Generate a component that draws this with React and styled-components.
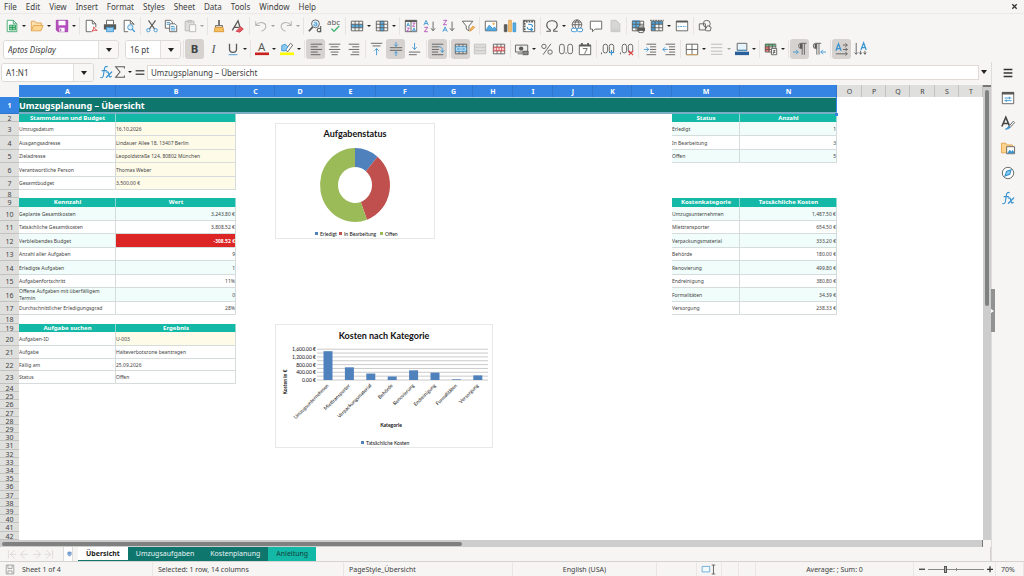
import React from "react";
import styled, { createGlobalStyle } from "styled-components";

const GlobalStyle = createGlobalStyle`
  * {
    box-sizing: border-box;
  }
  body {
    margin: 0;
    overflow: hidden;
    background: #f6f5f4;
    color: #3d3d3d;
    font-family: "Noto Sans", sans-serif;
    font-size: 8px;
  }
  button, input, select {
    font: inherit;
    color: inherit;
  }
`;

const Window = styled.div`
  display: flex;
  flex-direction: column;
  height: 100vh;
`;
const MenuBar = styled.nav`
  display: flex;
  align-items: center;
  height: 14px;
  padding: 0 4px;
  border-bottom: 1px solid #eceae8;
`;
const MenuItem = styled.button`
  border: 0;
  padding: 0;
  margin-right: 9px;
  background: none;
  line-height: 13px;
`;
const CloseButton = styled(MenuItem)`
  margin: 0 2px 0 auto;
  width: 7px;
  height: 13px;
`;
const Toolbar = styled.div`
  display: flex;
  flex: none;
  align-items: center;
  height: 24px;
  padding-left: ${(p) => (p.$second ? "3px" : "2px")};
  padding-bottom: ${(p) => (p.$second ? "2px" : "0")};
`;
const ToolButton = styled.button`
  display: flex;
  flex: none;
  align-items: center;
  justify-content: center;
  width: 19px;
  height: 20px;
  padding: 0;
  border: 0;
  border-radius: 3px;
  background: ${(p) => (p.$on ? "#d5d2cf" : "none")};
  opacity: ${(p) => (p.$dim ? 0.4 : 1)};
  svg {
    width: 14px;
    height: 14px;
  }
`;
const CaretButton = styled.button`
  display: flex;
  flex: none;
  align-items: center;
  justify-content: center;
  width: ${(p) => (p.$wide ? "20px" : "6px")};
  height: 18px;
  padding: 0;
  border: 0;
  border-left: ${(p) => (p.$wide ? "1px solid #e2dfdc" : "0")};
  background: none;
  opacity: ${(p) => (p.$dim ? 0.4 : 1)};
  &::after {
    content: "";
    border: solid transparent;
    border-width: ${(p) => (p.$wide || p.$big ? "4px 3px 0" : "2px 2px 0")};
    border-top-color: #222;
  }
`;
const Separator = styled.span`
  flex: none;
  width: 4px;
  height: 18px;
  background: linear-gradient(#e6e3e0, #e6e3e0) 2px 0 / 1px 100% no-repeat;
`;
const Combo = styled.div`
  display: flex;
  flex: none;
  width: ${(p) => p.$width};
  height: 19px;
  margin-right: ${(p) => p.$gap};
  border: 1px solid #dcd9d6;
  border-radius: 3px;
  background: #fff;
  overflow: hidden;
  input {
    flex: 1;
    min-width: 0;
    padding: 0 4px;
    border: 0;
    font-style: ${(p) => (p.$italic ? "italic" : "normal")};
  }
  button {
    background: #f8f7f6;
  }
`;
const Body = styled.div`
  display: flex;
  flex: 1;
  min-height: 0;
`;
const Main = styled.main`
  display: flex;
  flex: 1;
  flex-direction: column;
  min-width: 0;
`;
const FormulaBar = styled.div`
  display: flex;
  flex: none;
  align-items: center;
  height: 23px;
  padding: 0 4px 3px 1px;
`;
const FormulaButton = styled(ToolButton)`
  width: 14px;
  height: 16px;
`;
const FormulaInput = styled.input`
  flex: 1;
  min-width: 0;
  height: 15px;
  margin-right: 2px;
  padding: 0 3px;
  border: 1px solid #e2d9d4;
  background: #fff;
`;
const SheetArea = styled.div`
  display: flex;
  flex: 1;
  min-height: 0;
`;
const Sheet = styled.div`
  position: relative;
  flex: 1;
  min-width: 0;
  overflow: hidden;
  background: #fff;
`;
const Grid = styled.table`
  width: 100%;
  table-layout: fixed;
  border-collapse: collapse;
  line-height: 7px;
  td,
  th {
    padding: 0;
    overflow: hidden;
  }
`;
const GridRow = styled.tr`
  height: ${(p) => p.$height}px;
`;
const Corner = styled.td`
  background: #f6f5f4;
`;
const ColumnHead = styled.th`
  height: 12px;
  background: ${(p) => (p.$selected ? "#3584e4" : "#dfdfde")};
  color: ${(p) => (p.$selected ? "#fff" : "#444")};
  box-shadow: inset -1px 0 ${(p) => (p.$selected ? "#2f76cc" : "#c2c2c1")};
  font-size: 7px;
  font-weight: ${(p) => (p.$selected ? 700 : 400)};
`;
const RowHead = styled.th`
  background: ${(p) => (p.$selected ? "#3584e4" : "#dfdfde")};
  color: ${(p) => (p.$selected ? "#fff" : "#444")};
  box-shadow: inset 0 -1px ${(p) => (p.$selected ? "#2f76cc" : "#c2c2c1")};
  font-size: 7px;
  font-weight: ${(p) => (p.$selected ? 700 : 400)};
`;
const TitleCell = styled.td`
  background: #0f766e;
  color: #fff;
  box-shadow: inset 0 -2px #79afc6, inset -1px 0 #3584e4, inset 0 1px #a9cfdb;
  font-size: 9px;
  font-weight: 700;
  line-height: 12px;
`;
const tones = {
  plain: "#fff",
  mint: "#f0fdfa",
  cream: "#fefbe9",
  red: "#dc2626",
};
const Cell = styled.td`
  background: ${(p) => tones[p.$tone]};
  color: ${(p) => (p.$tone === "red" ? "#fff" : "#444")};
  font-size: 5px;
  font-weight: ${(p) => (p.$tone === "red" ? 700 : 400)};
  text-align: ${(p) => (p.$right ? "right" : "left")};
  box-shadow: inset -1px -1px #d6dcdc;
  ${Grid} & {
    padding-right: 1px;
  }
`;
const HeadCell = styled.td`
  background: #14b8a6;
  color: #fff;
  box-shadow: inset -1px 0 #8fd8cf;
  font-size: 6px;
  font-weight: 700;
  text-align: center;
`;
const FillHandle = styled.span`
  position: absolute;
  top: 28px;
  left: 835px;
  width: 3px;
  height: 3px;
  background: #3584e4;
`;
const ChartFrame = styled.figure`
  position: absolute;
  top: ${(p) => p.$top}px;
  left: 275px;
  margin: 0;
  border: 1px solid #e8e8e8;
  background: #fff;
  svg {
    display: block;
  }
  text {
    font-family: Lato, sans-serif;
    fill: #111;
  }
`;
const VerticalScroll = styled.div`
  width: 8px;
  padding: 3px 2px 0;
  background: #cdcdcd;
  border-top: 2px solid #777;
`;
const HorizontalScroll = styled.div`
  height: 7px;
  margin-right: 8px;
  padding: 2px 2px 0;
  background: #cdcdcd;
  border-right: 1px solid #777;
`;
const Thumb = styled.div`
  width: ${(p) => p.$width};
  height: ${(p) => p.$height};
  border-radius: 2px;
  background: #7f8080;
`;
const TabBar = styled.div`
  display: flex;
  flex: none;
  height: 14px;
  padding-left: 5px;
  border-right: 1px solid #d5d2cf;
`;
const TabNav = styled.button`
  width: 13px;
  padding: 0;
  border: 0;
  background: none;
  svg {
    display: block;
    width: 12px;
    height: 12px;
  }
`;
const TabLock = styled.span`
  display: flex;
  align-items: center;
  justify-content: flex-end;
  width: 10px;
  margin: 0 5px 0 6px;
  background: #fff;
  border: solid #ddd;
  border-width: 0 1px;
  svg {
    width: 5px;
    height: 6px;
  }
`;
const Tab = styled.button`
  height: 14px;
  padding: 0 8px;
  border: 0;
  background: ${(p) => p.$bg};
  color: ${(p) => p.$color};
  border-bottom: 1px solid ${(p) => (p.$active ? "#0f766e" : p.$bg)};
  font-size: 7px;
  font-weight: ${(p) => (p.$active ? 700 : 400)};
  line-height: 13px;
`;
const Sidebar = styled.aside`
  position: relative;
  display: flex;
  flex-direction: column;
  align-items: center;
  gap: 8px;
  width: 33px;
  padding-top: 2px;
  border-left: 1px solid #dedbd8;
`;
const SideButton = styled(ToolButton)`
  height: 17px;
`;
const SideHandle = styled.button`
  position: absolute;
  top: 227px;
  left: -1px;
  display: flex;
  align-items: center;
  width: 4px;
  height: 43px;
  padding: 0;
  border: 0;
  background: #929292;
  &::after {
    content: "";
    border: solid transparent;
    border-width: 2px 0 2px 3px;
    border-left-color: #fff;
  }
`;
const StatusBar = styled.footer`
  display: grid;
  grid-template-columns: 153fr 191fr 169fr 144fr 40fr 25fr 17fr 17fr 158fr 82fr 28fr;
  flex: none;
  height: 15px;
  border-top: 1px solid #d5d2cf;
`;
const StatusCell = styled.div`
  display: flex;
  align-items: center;
  justify-content: ${(p) => (p.$center ? "center" : "flex-start")};
  gap: 5px;
  min-width: 0;
  padding-left: ${(p) => (p.$center ? "0" : "5px")};
  border-right: 1px solid #e9e6e4;
  white-space: nowrap;
  font-size: 7px;
  svg {
    flex: none;
    width: 14px;
    height: 11px;
  }
`;
const FileCell = styled(StatusCell)`
  padding-left: 3px;
`;
const ZoomStep = styled.button`
  width: 8px;
  height: 12px;
  padding: 0;
  border: 0;
  background: none;
  svg {
    display: block;
    width: 8px;
    height: 12px;
  }
`;
const ZoomSlider = styled.input`
  flex: 1;
  min-width: 0;
  height: 9px;
  margin: 0;
  appearance: none;
  background: linear-gradient(#888, #888) 0 4px / 100% 1px no-repeat,
    linear-gradient(#888, #888) 50% 3px / 1px 3px no-repeat;
  &::-webkit-slider-thumb {
    appearance: none;
    width: 3px;
    height: 7px;
    border: 1px solid #555;
    background: #aaa;
  }
`;
const ZoomCell = styled(StatusCell)`
  gap: 2px;
  padding: 0 1px 0 4px;
`;

const G = "#5a5a58";
const B = "#3a94d0";

const lines = (rows, color = G) =>
  rows.map(([x, y, w]) => (
    <path key={y + "-" + x} d={`M${x} ${y}h${w}`} stroke={color} fill="none" />
  ));
const sheetGrid = (
  <path d="M1.5 2.5h13v11h-13zM1.5 6h13M1.5 10h13M5.8 2.5v11M10.2 2.5v11" stroke={G} fill="none" />
);
const letter = (ch, x, y, size, fill = G, extra = {}) => (
  <text x={x} y={y} fontSize={size} fill={fill} {...extra}>
    {ch}
  </text>
);

const icons = {
  new: (
    <g>
      <path d="M2.5 1.5h7l4 4v9h-11z" fill="#fff" stroke="#3ba66b" />
      <path d="M9.5 1.5v4h4" fill="none" stroke="#3ba66b" />
      <path d="M5 7h7v5.5H5zM5 9.7h7M8.5 7v5.500" fill="#8fd3a9" stroke="#2f9e5e" />
    </g>
  ),
  open: (
    <g stroke="#e0a04a">
      <path d="M1.5 13.5v-11h4l1.5 2h6v3" fill="#fbe0b0" />
      <path d="M1.5 13.5l2.5-6h11l-2.5 6z" fill="#fdd791" />
    </g>
  ),
  save: (
    <g>
      <path d="M1.5 1.5h13v13h-11l-2-2z" fill="#b84fc0" stroke="#9b3ea5" />
      <path d="M4 2h8v5H4zM5 10h6v4.5H5z" fill="#fff" />
      <path d="M6.5 11v3" stroke="#9b3ea5" />
    </g>
  ),
  pdf: (
    <g fill="#fff" stroke={G}>
      <path d="M8.5 14.5h-6v-13h7l4 4v4M9.5 1.5v4h4" />
      <path d="M9 14c2-2 2.5-4 2-5 2 3 3 4 4 4-2-.3-4 0-6 1z" stroke="#d8373a" />
    </g>
  ),
  print: (
    <g>
      <path d="M4 6V1.500h8V6" fill="#fff" stroke={G} />
      <path d="M1 6h14v6H1z" fill={G} />
      <path d="M4 9.5h8v5H4z" fill="#8ecaf0" stroke={B} />
    </g>
  ),
  preview: (
    <g fill="none" stroke={G}>
      <path d="M7 14.5H2.5v-13h7l4 4V7M9.5 1.5v4h4" fill="#fff" />
      <circle cx="9.5" cy="9.5" r="3" fill="#dff0fb" stroke={B} />
      <path d="M11.7 11.7l3 3" stroke={B} strokeWidth="1.5" />
    </g>
  ),
  cut: (
    <g fill="none">
      <path d="M4 1.5l7 10M12 1.5l-7 10" stroke={G} strokeWidth="1.3" />
      <circle cx="3.8" cy="12.8" r="1.9" stroke={B} />
      <circle cx="12.2" cy="12.8" r="1.9" stroke={B} />
    </g>
  ),
  copy: (
    <g fill="#fff" stroke={G}>
      <path d="M1.5 1.5h6l2 2v7h-8z" />
      <path d="M6.5 5.5h6l2 2v7h-8z" />
      <path d="M3 4h4M3 6h3M8 8.5h4M8 10.5h5M8 12.5h5" stroke={B} />
    </g>
  ),
  paste: (
    <g fill="#bbb" stroke={G}>
      <path d="M2.5 2.5h10v11h-10z" />
      <path d="M5.5 1.5h4v2h-4z" />
      <path d="M7.5 6.5h7v8h-7z" fill="#fff" />
    </g>
  ),
  clone: (
    <g>
      <path d="M8 1v6" stroke={G} strokeWidth="1.8" />
      <path d="M4 7.5h8v2H4z" fill="#fff" stroke={G} />
      <path d="M3.5 9.5h9l1 5h-11z" fill="#f6bf62" stroke="#d99530" />
    </g>
  ),
  clear: (
    <g>
      <path d="M1.5 13L8 2l2.5 8M4 9.5h5" fill="none" stroke={G} strokeWidth="1.5" />
      <path d="M6 14l5-5 3 2.5-4 3.5z" fill="#e75b64" stroke="#c9333d" />
    </g>
  ),
  undo: <path d="M2 2.5v5h5M2.5 7C6 2.5 13 3.5 13.5 8c0 3-2 5-5 6" fill="none" stroke={G} strokeWidth="1.2" />,
  redo: <path d="M14 2.5v5H9M13.5 7C10 2.5 3 3.5 2.5 8c0 3 2 5 5 6" fill="none" stroke={G} strokeWidth="1.2" />,
  find: (
    <g fill="none">
      <circle cx="8.5" cy="5.5" r="4.500" stroke={G} fill="#e2f1fb" />
      <path d="M5.500 9l-4.500 5" stroke={G} strokeWidth="2" />
      <path d="M7 4c2-1 3 0 3 1v3M10 5.500c-4-.5-4 2.500-2 2.500 1 0 2-1 2-1.500" stroke={B} />
      <path d="M14.500 8v7M14.500 12c0-2-4-2-4 .7s4 2.500 4 0" stroke={G} strokeWidth="1.300" />
    </g>
  ),
  spell: (
    <g>
      {letter("abc", 0, 7, 9)}
      <path d="M5 11l3 3 6-6" stroke="#3fb46f" fill="none" strokeWidth="1.5" />
    </g>
  ),
  row: (
    <g>
      <path d="M1 6h14v4H1z" fill="#5baee3" />
      {sheetGrid}
    </g>
  ),
  column: (
    <g>
      <path d="M5.8 2h4.4v12H5.8z" fill="#5baee3" />
      {sheetGrid}
    </g>
  ),
  sort: (
    <g fill="none">
      <path d="M1.5 1.5h13v13h-13zM8 1.5v13" fill="#fff" stroke={G} />
      <path d="M1.5 2.5h13" stroke={G} strokeWidth="2" />
      <path d="M3 8.500l1.700-4 1.700 4M3.500 7.300h2.500M9.700 14l1.700-4 1.700 4M10.200 12.800h2.500" stroke={B} />
      <path d="M9.700 4.700h3l-3 3.600h3M3.200 10.200h3l-3 3.600h3" stroke="#b04bb8" />
    </g>
  ),
  sortAsc: (
    <g fill="none">
      <path d="M1 7l2.500-5.500L6 7M2 5.200h3" stroke={B} />
      <path d="M1.500 9.500h4l-4 5h4" stroke="#b04bb8" />
      <path d="M11.5 3v10M9 10.5l2.5 3 2.5-3" stroke={G} />
    </g>
  ),
  sortDesc: (
    <g fill="none">
      <path d="M1.500 1.500h4l-4 5h4" stroke="#b04bb8" />
      <path d="M1 14.500L3.500 9 6 14.500M2 12.700h3" stroke={B} />
      <path d="M11.5 3v10M9 10.5l2.5 3 2.5-3" stroke={G} />
    </g>
  ),
  filter: (
    <g>
      <path d="M1.5 2.5h12L9 8v5.5l-3-2V8z" fill="#fff" stroke={G} />
      <path d="M10 14l1-3 3-3 1.5 1.5-3 3z" fill="#f5b65a" stroke="#dd9638" />
    </g>
  ),
  image: (
    <g>
      <path d="M1.5 2.5h13v11h-13z" fill="#fff" stroke={G} />
      <path d="M2 13l4-6 4 4 2-2 2 3v1z" fill="#58abdf" stroke={B} />
      <circle cx="11" cy="5.5" r="1.3" fill="#f2a83c" />
    </g>
  ),
  chart: (
    <g>
      <path d="M1.5 6.5h3v8h-3z" fill={G} stroke={G} />
      <path d="M6.5 1.5h3v13h-3z" fill="#f6c277" stroke="#dfa04a" />
      <path d="M11.5 4.5h3v10h-3z" fill="#58abdf" stroke={B} />
    </g>
  ),
  pivot: (
    <g fill="none">
      <path d="M1.5 1.5h13v13h-13z" fill="#fff" stroke={G} />
      <path d="M1.5 3h13M3 1.5v13" stroke={G} strokeWidth="2" strokeDasharray="2 1" />
      <path d="M6 9c0 3 2 3 6 3M10 10l2 2-2 2M12 9c0-3-2-3-5-3" stroke={B} strokeWidth="1.3" />
    </g>
  ),
  omega: (
    <path
      d="M1.500 14h4.500v-1.500C3.500 11 2 9.500 2 7c0-3 2.500-5 6-5s6 2 6 5c0 2.500-1.500 4-4 5.500V14h4.500"
      fill="none"
      stroke={G}
      strokeWidth="1.300"
    />
  ),
  link: (
    <g fill="none" stroke={G}>
      <circle cx="8" cy="6.5" r="5.5" />
      <path d="M2.5 6.5h11M8 1c-3 3-3 8 0 11M8 1c3 3 3 8 0 11M3.5 3.5h9" />
      <rect x="1.5" y="10.5" width="6.5" height="4" rx="2" stroke={B} fill="#fff" />
      <rect x="8" y="10.5" width="6.5" height="4" rx="2" stroke={B} fill="#fff" />
    </g>
  ),
  comment: <path d="M1.5 2.5h13v9H7l-3 3v-3H1.5z" fill="#fff" stroke={G} />,
  header: (
    <g>
      <path d="M3.5 1.5h6l4 4v9h-10z" fill="#aaa" stroke="#777" />
      <path d="M5 12.5h7" stroke="#777" />
    </g>
  ),
  printArea: (
    <g>
      <path d="M1.5 1.5h8.5v9H1.5z" fill="#5baee3" />
      {sheetGrid}
      <path d="M7 10h9v4H7z" fill={G} />
      <path d="M9 8h5v2H9zM9 13h5v2.5H9z" fill="#fff" stroke={G} />
    </g>
  ),
  freeze: (
    <g>
      <path d="M1.5 2.5h13v3.5H6v7.5H1.5z" fill="#4a9fd8" />
      {sheetGrid}
      <path d="M0 1.5h16" stroke={G} strokeDasharray="2 1" />
    </g>
  ),
  split: (
    <g fill="none">
      <path d="M1.5 2.5h13v11h-13z" fill="#fff" stroke={G} />
      <path d="M1.5 3h13" stroke={G} strokeWidth="2" />
      <path d="M3 8.5h10" stroke={B} strokeDasharray="2 1" />
    </g>
  ),
  shapes: (
    <g fill="none" stroke={G}>
      <path d="M1.5 5.5h7v7h-7z" />
      <circle cx="10" cy="5.5" r="4" />
      <path d="M8 12.5l3-5 4 2-1 4h-4z" fill="#f6f5f4" />
    </g>
  ),
  bold: letter("B", 3, 13, 13, "#444", { fontWeight: 700 }),
  italic: letter("I", 5, 13, 14, G, { fontStyle: "italic", fontFamily: "Liberation Serif, serif" }),
  underline: (
    <g>
      <path d="M4 2v6c0 5 8 5 8 0V2" fill="none" stroke={G} strokeWidth="1.500" />
      <path d="M3 14.5h10" stroke={B} />
    </g>
  ),
  fontColor: (
    <g>
      {letter("A", 3.5, 10.5, 13)}
      <path d="M0 13.5h16" stroke="#c9211e" strokeWidth="3" />
    </g>
  ),
  highlight: (
    <g>
      <path d="M6 9l6-7.500 2.500 2L9 11z" stroke={G} fill="#fff" />
      <path d="M2 10V4l4-1.500 3 3-3 4.500z" stroke={B} fill="#8ecaf0" />
      <path d="M0 13.5h16" stroke="#ff0" strokeWidth="3" />
    </g>
  ),
  left: <g>{lines([[2, 2.5, 13], [2, 5.5, 8], [2, 8.5, 13], [2, 11.5, 8], [2, 14.5, 11]])}</g>,
  center: <g>{lines([[1, 2.5, 13], [3, 5.5, 9], [1, 8.5, 13], [3, 11.5, 9], [4, 14.5, 7]])}</g>,
  right: <g>{lines([[2, 2.5, 12], [6, 5.5, 8], [2, 8.5, 12], [6, 11.5, 8], [4, 14.5, 10]])}</g>,
  top: (
    <g>
      {lines([[1, 1.5, 13], [3, 4.5, 9]])}
      <path d="M7.5 15V7.5M5 10l2.5-2.5L10 10" stroke={B} fill="none" />
    </g>
  ),
  middle: (
    <g>
      {lines([[1, 6.5, 14], [1, 9.5, 14]])}
      <path d="M8 0v5M6 3l2 2 2-2M8 16v-5M6 13l2-2 2 2" stroke={B} fill="none" />
    </g>
  ),
  bottom: (
    <g>
      {lines([[1, 11.5, 13], [1, 14.5, 9]])}
      <path d="M7.5 1v7.5M5 6l2.5 2.5L10 6" stroke={B} fill="none" />
    </g>
  ),
  wrap: (
    <g>
      {lines([[1, 2.5, 13], [1, 5.5, 8], [1, 8.5, 8], [1, 11.5, 7], [1, 14.5, 13]])}
      <path d="M9 5.5c4 0 4 2 4 6M11 9.5l2 2.5 2-2.500" stroke={B} fill="none" />
    </g>
  ),
  merge: (
    <g>
      {sheetGrid}
      <path d="M2 5.5h12v5H2z" fill="#d5effc" stroke={B} />
      <path d="M4 8h8M5.5 6.5L4 8l1.5 1.5M10.5 6.5L12 8l-1.5 1.5" stroke={B} fill="none" />
    </g>
  ),
  mergeCells: <path d="M1.5 2.5h13v11h-13zM1.5 6h13M1.5 10h13" fill="#bbb" stroke="#777" />,
  unmerge: (
    <g>
      {sheetGrid}
      <path d="M2 6h12v4H2zM8 6v4M5 6v4M11 6v4" fill="#fde3e3" stroke="#d8474a" />
    </g>
  ),
  currency: (
    <g>
      <path d="M.5 3.5h14v8H.5z" fill="#eee" stroke={G} />
      <circle cx="7" cy="7.5" r="2.5" fill={G} />
      <path d="M9 10.5h6v4H9zM3 13.5h5" fill="#888" stroke={G} />
    </g>
  ),
  percent: (
    <g fill="none" stroke={G}>
      <circle cx="4.5" cy="5" r="2.5" />
      <circle cx="11.5" cy="11.5" r="2.5" />
      <path d="M12.5 2l-9 12.5" />
    </g>
  ),
  number: (
    <g fill="none" stroke={G}>
      <rect x=".5" y="2.5" width="5.5" height="11" rx="2.7" />
      <path d="M8 12v1.5" />
      <rect x="10" y="2.5" width="5.5" height="11" rx="2.7" />
    </g>
  ),
  date: (
    <g>
      <path d="M1.5 3.5h13v11h-13z" fill="#fff" stroke={G} />
      <path d="M1.5 4h13M4.5 1v3M11.5 1v3" stroke={G} strokeWidth="2" />
      <path d="M5.5 7.5h5l-3 6" stroke={G} fill="none" />
    </g>
  ),
  addDecimal: (
    <g fill="none" stroke={G}>
      <path d="M.5 12v2" />
      <rect x="2.5" y="2.5" width="5" height="10" rx="2.5" />
      <rect x="9.5" y="2.5" width="5" height="10" rx="2.5" />
      <path d="M12 9v6M9 12h6" stroke={B} strokeWidth="1.3" />
    </g>
  ),
  delDecimal: (
    <g fill="none" stroke={G}>
      <path d="M.5 12v2" />
      <rect x="2.5" y="2.5" width="5" height="10" rx="2.5" />
      <rect x="9.5" y="2.5" width="5" height="10" rx="2.5" />
      <path d="M10 10l5 5M15 10l-5 5" stroke="#e0484b" strokeWidth="1.3" />
    </g>
  ),
  indent: (
    <g>
      {lines([[4, 2.5, 11], [8, 5.5, 7], [8, 8.5, 7], [8, 11.5, 7], [4, 14.5, 11]])}
      <path d="M1 8.5h5.5M4 6l2.5 2.5L4 11" stroke={B} fill="none" />
    </g>
  ),
  outdent: (
    <g>
      {lines([[4, 2.5, 11], [8, 5.5, 7], [8, 8.5, 7], [8, 11.5, 7], [4, 14.5, 11]])}
      <path d="M1 8.5h5.5M3.5 6L1 8.5 3.5 11" stroke={B} fill="none" />
    </g>
  ),
  borders: (
    <g fill="#fff">
      <path d="M1.5 2.5h13v12h-13zM1.5 8.5h13M8 2.5v12" stroke={G} />
      <path d="M1.5 14.5h13" stroke="#e5a85b" />
    </g>
  ),
  borderStyle: <g>{lines([[1, 2.5, 13], [1, 6.5, 13], [1, 10.5, 13], [1, 14, 13]])}</g>,
  borderColor: (
    <g>
      <path d="M2.5 1.5h11v8h-11z" fill="#e6f4fd" stroke={G} />
      <path d="M2.5 9.5h11" stroke={B} />
      <path d="M0 13h16" stroke="#2a6099" strokeWidth="4" />
    </g>
  ),
  conditional: (
    <g>
      <path d="M1 2h12v3H1z" fill="#64bd80" />
      <path d="M1 5h6v6H1z" fill="#e9716f" />
      <path d="M1.5 2.5h12v9h-12zM1.5 5.5h12M1.5 8.5h12M5.5 2.5v9M9.5 2.5v9" stroke={G} fill="none" />
      <path d="M8.5 7.5h6v7h-6zM10 10h3M10 12h3M12.5 9l-2 4.5" fill="#fff" stroke={G} />
    </g>
  ),
  ltr: (
    <g fill="none">
      <path d="M15.500 1.500H9a2.500 3 0 000 6h1.500M10.500 1.500v13M13 1.500v13" stroke={G} />
      <path d="M8 2h2.500v5H8z" fill={G} />
      <path d="M0 11.5h6M3.5 9l2.500 2.500-2.500 2.500" stroke={B} />
    </g>
  ),
  rtl: (
    <g fill="none">
      <path d="M10.500 1.500H4a2.500 3 0 000 6h1.500M5.500 1.500v13M8 1.500v13" stroke={G} />
      <path d="M3 2h2.500v5H3z" fill={G} />
      <path d="M16 11.5h-6M12.5 9l-2.500 2.500 2.500 2.500" stroke={B} />
    </g>
  ),
  textLtr: (
    <g fill="none">
      <path d="M1 10l3-8 3 8M2 7.500h4" stroke={B} strokeWidth="1.500" />
      <path d="M9 3.5h5M12 1.5l2 2-2 2M9 8.5h5M12 6.5l2 2-2 2M1 13.5h13M12 11.5l2 2-2 2" stroke={G} />
    </g>
  ),
  textTtb: (
    <g fill="none">
      <path d="M8 9l3-8 3 8M9 6.500h4" stroke={B} strokeWidth="1.500" />
      <path d="M2.5 1v13M.5 12l2 2 2-2M7.5 10v4M6 12l1.5 2L9 12M12.5 10v4M11 12l1.5 2 1.5-2" stroke={G} />
    </g>
  ),
  fx: (
    <g fill="none" stroke={B} strokeLinecap="round">
      <path d="M9.500 2c-2-1.200-3 .5-3.300 2.500L5 12c-.3 2-1.500 3-3 2.300M3.500 6.500h5" strokeWidth="1.300" />
      <path d="M8.500 8c1.500-.5 2 0 2.500 2l.7 2.500c.3 1.500 1.300 1.500 2.300.5M14.500 8L8.500 14" strokeWidth="1.500" />
    </g>
  ),
  sum: <path d="M13 4V2H3l5 6-5 6h10v-2" fill="none" stroke={G} strokeWidth="1.2" />,
  equals: <path d="M3 6.5h10M3 10.5h10" stroke={G} strokeWidth="1.8" />,
  hamburger: <path d="M3 4h10M3 8h10M3 12h10" stroke="#333" strokeWidth="1.8" />,
  properties: (
    <g fill="none">
      <path d="M1.5 2h13v12.5h-13z" fill="#fff" stroke={G} />
      <path d="M1 2.5h14" stroke={G} strokeWidth="3" />
      <path d="M4 8h8M4 11h8M9.5 6.5v3M6 9.5v3" stroke={B} />
    </g>
  ),
  styles: (
    <g>
      <path d="M1 12l4.500-10.500L9.500 11M3 8.500h5" fill="none" stroke="#444" strokeWidth="1.800" />
      <path d="M9 12l5-6 1.5 1.5-5 5.5z" fill="#fff" stroke={G} />
      <path d="M5 15c3 0 2-3 4-3s2 3-4 3z" fill={B} stroke={B} />
    </g>
  ),
  gallery: (
    <g>
      <path d="M.5 13.5v-11h5l1.5 2h6v9z" fill="#fcd28d" stroke="#e0a04a" />
      <path d="M6.5 6.5h9v8h-9z" fill="#fff" stroke={G} />
      <path d="M7 14l3-4 2 2 1.5-2 2 4z" fill={B} />
    </g>
  ),
  navigator: (
    <g>
      <circle cx="8" cy="8" r="6.5" fill="#fff" stroke={G} />
      <path d="M11.5 4.5l-1.5 5-5.5 2 2-5.500z" fill="#8ecaf0" stroke={B} strokeWidth="1.3" />
    </g>
  ),
  close: <path d="M3 3l10 10M13 3L3 13" stroke="#333" strokeWidth="3" />,
  tabFirst: <path d="M4.5 3v11M13 3L7 8.5l6 5.5M7 8.5h8" fill="none" stroke="#d5d2cf" />,
  tabPrev: <path d="M9 3L3 8.5 9 14M4 8.5h9" fill="none" stroke="#d5d2cf" />,
  tabNext: <path d="M7 3l6 5.5L7 14M3 8.5h9" fill="none" stroke="#d5d2cf" />,
  tabLast: <path d="M11.5 3v11M3 3l6 5.5L3 14M1 8.5h8" fill="none" stroke="#d5d2cf" />,
  lock: <path d="M3 2h10v8l-5 5-5-5zM6.5 6h3" fill="#9cc1e8" stroke="#3465a4" strokeWidth="2" />,
  selection: (
    <g fill="none">
      <path d="M-2 3.5h11v8H-2z" fill="#f4fbff" stroke={B} />
      <path d="M12 1.5h5M12 14.5h5M14.5 1.5v13" stroke={G} strokeWidth="1.3" />
    </g>
  ),
  minus: <path d="M2 8.5h12" stroke="#333" strokeWidth="2.5" />,
  plus: <path d="M2 8.5h12M8 2.5v12" stroke="#333" strokeWidth="2.5" />,
};

const Icon = ({ name }) => (
  <svg viewBox="0 0 16 16" overflow="visible" aria-hidden="true">
    {icons[name]}
  </svg>
);

// "|" is a separator, "+" a drop-down arrow, "*" pressed, "-" disabled
const standardTools =
  "new+ open+ save+ | pdf print preview | cut copy paste-+ | clone clear | undo-+ redo-+ | find spell | row+ column+ | sort sortAsc sortDesc filter | image chart pivot | omega+ link comment header- | printArea freeze+ split | shapes";
const formatTools =
  "| bold* italic underline+ | fontColor+ highlight+ | left* center right | top middle* bottom | wrap* | merge* mergeCells- unmerge | currency+ percent number date | addDecimal delDecimal | indent outdent | borders+ borderStyle-+ borderColor+ | conditional+ | ltr* rtl | textLtr* textTtb";

const Tools = ({ spec }) =>
  spec.split(" ").map((item, i) => {
    if (item === "|") return <Separator key={i} />;
    const name = item.replace(/[-+*]/g, "");
    const dim = item.includes("-");
    return (
      <React.Fragment key={i}>
        <ToolButton aria-label={name} $on={item.includes("*")} $dim={dim}>
          <Icon name={name} />
        </ToolButton>
        {item.includes("+") && <CaretButton aria-label={name + " options"} $dim={dim} />}
      </React.Fragment>
    );
  });

const menus = ["File", "Edit", "View", "Insert", "Format", "Styles", "Sheet", "Data", "Tools", "Window", "Help"];

const columns = [
  ["A", 97], ["B", 120], ["C", 39], ["D", 50], ["E", 51], ["F", 58], ["G", 39],
  ["H", 40], ["I", 40], ["J", 40], ["K", 39], ["L", 40], ["M", 68], ["N", 97],
  ["O", 25], ["P", 24], ["Q", 24], ["R", 25], ["S", 24], ["T", null],
];

const heights = [17, 8, 14, 14, 13, 14, 13, 8, 9, 14, 13, 14, 13, 14, 13, 14, 13, 9, 8, 14, 13, 12, 13];
const rowHeight = (n) => heights[n - 1] || (n % 5 === 1 ? 9 : 8);

// row number: [first cell, second cell, tone, tone, second cell right aligned]
const left = {
  2: ["Stammdaten und Budget", "", "head"],
  3: ["Umzugsdatum", "16.10.2026", "plain", "cream"],
  4: ["Ausgangsadresse", "Lindauer Allee 18, 13407 Berlin", "plain", "cream"],
  5: ["Zieladresse", "Leopoldstraße 124, 80802 München", "plain", "cream"],
  6: ["Verantwortliche Person", "Thomas Weber", "plain", "cream"],
  7: ["Gesamtbudget", "3,500.00 €", "plain", "cream"],
  9: ["Kennzahl", "Wert", "head"],
  10: ["Geplante Gesamtkosten", "3,243.80 €", "mint", "mint", true],
  11: ["Tatsächliche Gesamtkosten", "3,808.52 €", "plain", "plain", true],
  12: ["Verbleibendes Budget", "-308.52 €", "mint", "red", true],
  13: ["Anzahl aller Aufgaben", "9", "plain", "plain", true],
  14: ["Erledigte Aufgaben", "1", "mint", "mint", true],
  15: ["Aufgabenfortschritt", "11%", "plain", "plain", true],
  16: ["Offene Aufgaben mit überfälligem Termin", "0", "mint", "mint", true],
  17: ["Durchschnittlicher Erledigungsgrad", "28%", "plain", "plain", true],
  19: ["Aufgabe suchen", "Ergebnis", "head"],
  20: ["Aufgaben-ID", "U-003", "plain", "cream"],
  21: ["Aufgabe", "Halteverbotszone beantragen", "plain", "plain"],
  22: ["Fällig am", "25.09.2026", "plain", "plain"],
  23: ["Status", "Offen", "plain", "plain"],
};
const right = {
  2: ["Status", "Anzahl", "head"],
  3: ["Erledigt", "1", "mint", "mint", true],
  4: ["In Bearbeitung", "3", "plain", "plain", true],
  5: ["Offen", "5", "mint", "mint", true],
  9: ["Kostenkategorie", "Tatsächliche Kosten", "head"],
  10: ["Umzugsunternehmen", "1,487.50 €", "mint", "mint", true],
  11: ["Miettransporter", "654.50 €", "plain", "plain", true],
  12: ["Verpackungsmaterial", "333.20 €", "mint", "mint", true],
  13: ["Behörde", "180.00 €", "plain", "plain", true],
  14: ["Renovierung", "499.80 €", "mint", "mint", true],
  15: ["Endreinigung", "380.80 €", "plain", "plain", true],
  16: ["Formalitäten", "34.39 €", "mint", "mint", true],
  17: ["Versorgung", "238.33 €", "plain", "plain", true],
};

const Pair = ({ data }) => {
  if (!data) return <td colSpan={2} />;
  const [a, b, toneA, toneB, alignRight] = data;
  if (toneA === "head") {
    return (
      <>
        <HeadCell>{a}</HeadCell>
        <HeadCell>{b}</HeadCell>
      </>
    );
  }
  return (
    <>
      <Cell $tone={toneA}>{a}</Cell>
      <Cell $tone={toneB} $right={alignRight}>
        {b}
      </Cell>
    </>
  );
};

const slices = [
  ["Erledigt", 1, "#4f81bd", 40],
  ["In Bearbeitung", 3, "#c0504d", 64],
  ["Offen", 5, "#9bbb59", 105],
];

const point = (turn, rx, ry) => {
  const angle = turn * 2 * Math.PI;
  return `${80 + rx * Math.sin(angle)} ${62 - ry * Math.cos(angle)}`;
};

const DonutChart = () => {
  let start = 0;
  return (
    <ChartFrame $top={38}>
      <svg width="158" height="114" viewBox="1 1 158 114">
        <text x="80" y="14" fontSize="9" fontWeight="700" textAnchor="middle">
          Aufgabenstatus
        </text>
        {slices.map(([name, value, color, x]) => {
          const from = start / 9;
          const to = (start + value) / 9;
          const big = value > 4 ? 1 : 0;
          start += value;
          return (
            <g key={name}>
              <path
                fill={color}
                d={`M${point(from, 35, 37)}A35 37 0 ${big} 1 ${point(to, 35, 37)}L${point(to, 17, 18)}A17 18 0 ${big} 0 ${point(from, 17, 18)}z`}
              />
              <rect x={x} y="109" width="3" height="3" fill={color} />
              <text x={x + 5} y="113" fontSize="5">
                {name}
              </text>
            </g>
          );
        })}
      </svg>
    </ChartFrame>
  );
};

const costs = [
  ["Umzugsunternehmen", 1487.5],
  ["Miettransporter", 654.5],
  ["Verpackungsmaterial", 333.2],
  ["Behörde", 180],
  ["Renovierung", 499.8],
  ["Endreinigung", 380.8],
  ["Formalitäten", 34.39],
  ["Versorgung", 238.33],
];

const BarChart = () => (
  <ChartFrame $top={239}>
    <svg width="216" height="122" viewBox="1 1 216 122">
      <text x="109" y="15" fontSize="9" fontWeight="700" textAnchor="middle">
        Kosten nach Kategorie
      </text>
      {[0, 1, 2, 3, 4, 5, 6, 7, 8].map((n) => (
        <path key={n} d={`M42 ${56 - n * 3.85}h171`} stroke="#b3b3b3" strokeWidth="0.7" />
      ))}
      {["0.00 €", "400.00 €", "800.00 €", "1,200.00 €", "1,600.00 €"].map((label, n) => (
        <text key={label} x="41" y={58 - n * 7.7} fontSize="5" textAnchor="end">
          {label}
        </text>
      ))}
      {costs.map(([name, value], i) => {
        const x = 53 + i * 21.4;
        const height = (value / 1600) * 31;
        return (
          <g key={name}>
            <rect x={x - 4.5} y={56 - height} width="9" height={height} fill="#4f81bd" />
            <text fontSize="5" textAnchor="end" transform={`translate(${x + 1} 62) rotate(-45)`}>
              {name}
            </text>
          </g>
        );
      })}
      <text fontSize="5" fontWeight="700" textAnchor="middle" transform="translate(12 58) rotate(-90)">
        Kosten in €
      </text>
      <text x="116" y="103" fontSize="5" fontWeight="700" textAnchor="middle">
        Kategorie
      </text>
      <rect x="86" y="117" width="3" height="3" fill="#4f81bd" />
      <text x="91" y="121" fontSize="5">
        Tatsächliche Kosten
      </text>
    </svg>
  </ChartFrame>
);

const rows = Array.from({ length: 42 }, (_, i) => i + 1);

const Spreadsheet = () => (
  <Sheet>
    <Grid>
      <colgroup>
        <col width="19" />
        {columns.map(([name, width]) => (
          <col key={name} width={width || undefined} />
        ))}
      </colgroup>
      <thead>
        <tr>
          <Corner />
          {columns.map(([name], i) => (
            <ColumnHead key={name} scope="col" $selected={i < 14}>
              {name}
            </ColumnHead>
          ))}
        </tr>
      </thead>
      <tbody>
        {rows.map((n) => (
          <GridRow key={n} $height={rowHeight(n)}>
            <RowHead scope="row" $selected={n === 1}>
              {n}
            </RowHead>
            {n === 1 ? (
              <TitleCell colSpan={14}>Umzugsplanung – Übersicht</TitleCell>
            ) : (
              <>
                <Pair data={left[n]} />
                <td colSpan={10} />
                <Pair data={right[n]} />
              </>
            )}
            <td colSpan={6} />
          </GridRow>
        ))}
      </tbody>
    </Grid>
    <FillHandle />
    <DonutChart />
    <BarChart />
  </Sheet>
);

const App = () => {
  return (
    <Window>
      <GlobalStyle />
      <MenuBar>
        {menus.map((name) => (
          <MenuItem key={name}>{name}</MenuItem>
        ))}
        <CloseButton aria-label="Close">
          <Icon name="close" />
        </CloseButton>
      </MenuBar>
      <Toolbar>
        <Tools spec={standardTools} />
      </Toolbar>
      <Toolbar $second>
        <Combo $width="116px" $gap="6px" $italic>
          <input aria-label="Font name" defaultValue="Aptos Display" />
          <CaretButton $wide aria-label="Font list" />
        </Combo>
        <Combo $width="56px" $gap="0">
          <input aria-label="Font size" defaultValue="16 pt" />
          <CaretButton $wide aria-label="Size list" />
        </Combo>
        <Tools spec={formatTools} />
      </Toolbar>
      <Body>
        <Main>
          <FormulaBar>
            <Combo $width="93px" $gap="5px">
              <input aria-label="Name box" defaultValue="A1:N1" />
              <CaretButton $wide aria-label="Name list" />
            </Combo>
            <FormulaButton aria-label="Function wizard">
              <Icon name="fx" />
            </FormulaButton>
            <FormulaButton aria-label="Select function">
              <Icon name="sum" />
            </FormulaButton>
            <CaretButton aria-label="Functions" />
            <FormulaButton aria-label="Formula">
              <Icon name="equals" />
            </FormulaButton>
            <FormulaInput aria-label="Input line" defaultValue="Umzugsplanung – Übersicht" />
            <CaretButton $big aria-label="Expand" />
          </FormulaBar>
          <SheetArea>
            <Spreadsheet />
            <VerticalScroll>
              <Thumb $width="4px" $height="216px" />
            </VerticalScroll>
          </SheetArea>
          <HorizontalScroll>
            <Thumb $width="47%" $height="4px" />
          </HorizontalScroll>
          <TabBar>
            {["tabFirst", "tabPrev", "tabNext", "tabLast"].map((name) => (
              <TabNav key={name} aria-label={name}>
                <Icon name={name} />
              </TabNav>
            ))}
            <TabLock>
              <Icon name="lock" />
            </TabLock>
            <Tab $active $bg="#fff" $color="#222">Übersicht</Tab>
            <Tab $bg="#0f766e" $color="#e6f5f3">Umzugsaufgaben</Tab>
            <Tab $bg="#0f766e" $color="#e6f5f3">Kostenplanung</Tab>
            <Tab $bg="#14b8a6" $color="#12403b">Anleitung</Tab>
          </TabBar>
        </Main>
        <Sidebar>
          {["hamburger", "properties", "styles", "gallery", "navigator", "fx"].map((name) => (
            <SideButton key={name} aria-label={name}>
              <Icon name={name} />
            </SideButton>
          ))}
          <SideHandle aria-label="Collapse sidebar" />
        </Sidebar>
      </Body>
      <StatusBar>
        <FileCell>
          <svg viewBox="0 0 16 16" aria-hidden="true">
            <path d="M2.5 1.5h11v13h-11zM5 1.5v5h6v-5M5 14v-4h6v4" fill="none" stroke="#888" />
          </svg>
          Sheet 1 of 4
        </FileCell>
        <StatusCell>Selected: 1 row, 14 columns</StatusCell>
        <StatusCell>PageStyle_Übersicht</StatusCell>
        <StatusCell $center>English (USA)</StatusCell>
        <StatusCell />
        <StatusCell $center>
          <Icon name="selection" />
        </StatusCell>
        <StatusCell />
        <StatusCell />
        <StatusCell $center>Average: ; Sum: 0</StatusCell>
        <ZoomCell>
          <ZoomStep aria-label="Zoom out">
            <Icon name="minus" />
          </ZoomStep>
          <ZoomSlider type="range" aria-label="Zoom" min="0" max="100" defaultValue="30" />
          <ZoomStep aria-label="Zoom in">
            <Icon name="plus" />
          </ZoomStep>
        </ZoomCell>
        <StatusCell>70%</StatusCell>
      </StatusBar>
    </Window>
  );
};

export default App;
